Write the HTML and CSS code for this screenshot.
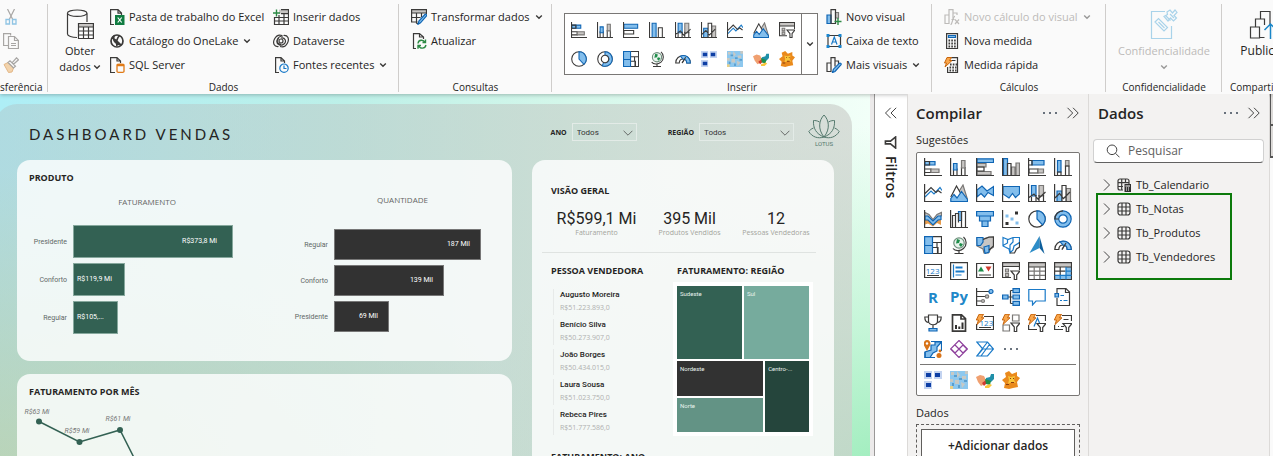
FILE: index.html
```html
<!DOCTYPE html>
<html lang="pt-BR">
<head>
<meta charset="utf-8">
<title>Dashboard Vendas</title>
<link rel="stylesheet" href="styles.css">
</head>
<body>
<svg class="sprite" aria-hidden="true">
  <symbol id="chev" viewBox="0 0 8 8"><path class="chev" d="M1.2 2.5 4 5.3 6.8 2.5"/></symbol>
  <symbol id="thin-down" viewBox="0 0 10 6"><path class="thin" d="M.6.8 5 5.2 9.4.8"/></symbol>
  <symbol id="thin-right" viewBox="0 0 8 14"><path class="thin" d="M1 1.5 6.5 7 1 12.500"/></symbol>
  <symbol id="dbl-right" viewBox="0 0 14 12"><path class="thin" d="M1.500.800 6.700 6 1.500 11.200M7 .800 12.200 6 7 11.200"/></symbol>
  <symbol id="dbl-left" viewBox="0 0 14 12"><path class="thin" d="M12.200.800 7 6 12.200 11.200M6.700.800 1.500 6 6.700 11.200"/></symbol>
  <symbol id="more" viewBox="0 0 18 18"><g class="dots"><circle cx="3" cy="9" r="1"/><circle cx="9" cy="9" r="1"/><circle cx="15" cy="9" r="1"/></g></symbol>

  <symbol id="cut" viewBox="0 0 16 16"><path class="g1" d="M4.500 0 10 11M11.500 0 6 11"/><path class="bsoft" d="M3 10.500h3.500v4.500H3zM9.500 10.500H13v4.500H9.500z"/></symbol>
  <symbol id="copy" viewBox="0 0 16 16"><path class="g1" d="M5 12.500H.600V.600h7v2M5.500 3.500h6l3.900 3.900v8.100H5.500zM11.500 3.500v4h4M8 10.500h5M8 12.500h5"/></symbol>
  <symbol id="brush" viewBox="0 0 16 16"><path class="tan" d="M1 7.500 5 5.500l5.500 5.500-1.500 4-3.500.500z"/><path class="g1" d="M5 5.500 7 3.800l5.500 5.500L10.500 11zM9 5.800l4.500-5 2 2-5 4.500"/></symbol>

  <symbol id="database" viewBox="0 0 28 30"><path class="k" d="M1.500 4.500v20.500c0 2 4.500 3.500 9.500 3.500M21 4.500V13"/><ellipse class="k" cx="11.200" cy="4.200" rx="9.800" ry="3.200"/><path class="w" d="M12.500 14.500h14.900v15H12.500z"/><path class="gf" d="M12.500 14.500h14.900v3.500H12.500z"/><path class="k" d="M12.500 14.500h14.900v15H12.500zM12.500 18h15M12.500 22h15M12.500 26h15M17.500 18v12M22.500 18v12"/></symbol>
  <symbol id="excel" viewBox="0 0 16 16"><path class="k" d="M5 15.500H1.600V.600H9l3.500 3.500V6M9 .600v3.500h3.500"/><path class="xl" d="M6 6h9.500v10H6z"/><path class="xlx" d="m8.700 8.500 4 5M12.700 8.500l-4 5"/></symbol>
  <symbol id="onelake" viewBox="0 0 16 16"><circle class="kk" cx="8" cy="8" r="6"/><path class="kk" d="M3 5c3 1 5 3 9 7M5 2.500C3.500 7 6 11 12 12M10.500 2.500C8 5 7 8 8 13"/></symbol>
  <symbol id="sql" viewBox="0 0 16 16"><path class="k" d="M6 15.500H1.600V.600H8L11.500 4v2M8 .600V4h3.500"/><path class="or" d="M8 8v6.500c0 .600 1.500 1 3.500 1s3.500-.400 3.500-1V8c0-1-7-1-7 0 0 .900 7 .900 7 0"/></symbol>
  <symbol id="enter" viewBox="0 0 16 16"><path class="gf" d="M6 .600h9.500v4H6z"/><path class="k" d="M8 .600h7.500v14.900H1.500V8M8 4.600h7.500M1.500 8.500h14M1.500 12h14M6 6v9.500M11 4.600v11"/><path class="gr" d="M0 4h7M3.500.500v7"/></symbol>
  <symbol id="dataverse" viewBox="0 0 16 16"><path class="k" d="M5.500 13.500C1 14-.500 10 1.500 6 3 3 6 1.500 9 2.500M10.500 2.500C15 2 16.500 6 14.500 10c-1.500 3-4.500 4.500-7.500 3.500M8 5c4-1 6 3.500 3 6s-8 .500-7-3.500c.700-2.800 3-4.500 6-4.500M8 11c-4 .500-5-4-2-5.500"/><circle class="k" cx="8" cy="8" r="2"/></symbol>
  <symbol id="recent" viewBox="0 0 16 16"><path class="k" d="M6 15.500H2.600V.600H8L11.500 4v2M8 .600V4h3.500"/><circle class="bl" cx="11" cy="11.200" r="4.200"/><path class="bl" d="M11 8.500v3h2.500"/></symbol>
  <symbol id="transform" viewBox="0 0 16 16"><path class="gf" d="M.600.600h14.900v3.400H.600z"/><path class="k" d="M7 14.500H5.500M15.500 5V.600H.600V13h6M.600 4h14.900M.600 8.500h9M5.500 4v10.500M10.500 4v4"/><path class="b" d="m7 15.300.900-3.300 6-6.500c1-.800 2.300.500 1.600 1.500l-6 6.800z"/></symbol>
  <symbol id="refresh" viewBox="0 0 16 16"><path class="k" d="M5 15.500H2.500V.600h6L12.500 4v2M8.500.600V4h4"/><path class="gr" d="M7 10.500c.500-4 5.500-4.200 7-1M14.500 6.500v3h-3M15 12c-1 4-6 4.200-7.500.500M7 15.800v-3.300h3"/></symbol>
  <symbol id="newvisual" viewBox="0 0 16 16"><path class="b" d="M1 6h4v8.500H1z"/><path class="gg" d="M9.500 3.500h3V9h-3z"/><path class="k" d="M5 14.500V.600h4.500v13.900z"/><path class="gr" d="M8.500 12.500h7M12 9v7"/></symbol>
  <symbol id="textbox" viewBox="0 0 16 16"><path class="k" d="M2 2.500h12.500v11H2z"/><path class="bdot" d="M.500 1h3v3h-3zM12.500 1h3v3h-3zM.500 12h3v3h-3zM12.500 12h3v3h-3z"/><path class="bl" d="M5.500 11.500 8.300 4l2.700 7.500M6.500 9h3.700"/></symbol>
  <symbol id="morevisual" viewBox="0 0 16 16"><path class="k" d="M5 14.500H1V6h4zM5 14.500V.600h4v9M9 4h3.500v3"/><path class="b" d="m6.500 15.500.900-3.300 5.800-5.800c1.200-.900 2.500.500 1.700 1.500L9 14.500z"/></symbol>
  <symbol id="calcvisual" viewBox="0 0 16 16"><path class="gg2" d="M1 6h4v8.500H1zM5 14.500V.600h4v9M9.500 4h3.500v2"/><path class="gg2" d="M6.500 15.800c2 0 2-8.500 4.500-8.500M7.500 10.500h3M11 10.500l4 4.500M15 10.500 11 15"/></symbol>
  <symbol id="calc" viewBox="0 0 16 16"><path class="k" d="M2.600.600h10.900v14.900H2.600z"/><path class="b" d="M4.500 2.500h7v2h-7z"/><path class="keys" d="M4.500 7.500h8M4.500 10.500h8M4.500 13.500h8"/></symbol>
  <symbol id="calcfast" viewBox="0 0 16 16"><path class="k" d="M7 .600h6.500v14.900H3.600V10M7 3.500h4.500"/><path class="keys" d="M6 7.500h7M5.500 10.500h7M5.500 13.500h7"/><path class="bolt" d="M3 .500h4.500l-2 3H8L1 10l1.500-4H.500z"/></symbol>
  <symbol id="sensitivity" viewBox="0 0 28 30"><path class="bs" d="M15 2.500H1.500v27h20V17M5 13l3.500-3.500 9 9-3.500 3.500zM8.500 13l6 6M17 3l3-2 2.500 3L25 1l2 2.500-3 3 2.500 2.500-3 3-3-3-2.500 3-4-4.500 3.500-2zM15.500 6.500l5 5M20 5l4 4"/></symbol>
  <symbol id="publish" viewBox="0 0 28 30"><path class="k" d="M1.500 18h9v11h-9zM6.500 18v-8h9v6M15.500 28.500h-5M11.500 10V2.500h9.500V16"/><path class="bl2" d="M21.500 30V15M15.500 21l6-6 6 6"/></symbol>
  <symbol id="funnel-ic" viewBox="0 0 14 14"><path class="kk" d="M1 1.500h12L8.500 7v5.500h-3V7z"/></symbol>
  <symbol id="search" viewBox="0 0 14 14"><circle class="thin" cx="6" cy="5.800" r="4.800"/><path class="thin" d="m9.500 9.300 4 4"/></symbol>
  <symbol id="tbl" viewBox="0 0 14 14"><rect class="k12" x="1" y="1" width="12" height="12" rx="2.500"/><path class="k12" d="M5 1v12M9 1v12M1 5h12M1 9h12"/></symbol>
  <symbol id="tblcalc" viewBox="0 0 14 14"><path class="k12" d="M12 6V3c0-1.200-.800-2-2-2H3C1.800 1 1 1.800 1 3v7c0 1.200.800 2 2 2h3M4.700 1v11M8.500 1v4M1 4.700h11M1 8.500h5"/><path class="dk" d="M7.500 6H14v8H7.500z"/><path class="wl" d="M8.500 8h4.500M9 10h1M11 10h1M9 12h1M11 12h1"/></symbol>

  <symbol id="sbar" viewBox="0 0 18 18"><path class="b" d="M1 3.500h4.500v3.500H1zM5.500 3.500h5.500v3.500H5.500z"/><path class="w" d="M1 11h6v3.500H1z"/><path class="k" d="M1 3.500h4.500v3.500H1M1 11h6v3.500H1"/><path class="g" d="M7 11h8v3.500H7z"/><path class="k" d="M.600 0v17.500H18"/></symbol>
  <symbol id="scol" viewBox="0 0 18 18"><path class="k" d="M3.500 11h3.500v6.500H3.500zM11.500 9.500H15v8h-3.500z"/><path class="b" d="M3.500 5.500h3.500V12H3.500z"/><path class="g" d="M11.500 2.500H15v7.500h-3.500z"/><path class="k" d="M.600 0v17.500H18"/></symbol>
  <symbol id="cbar" viewBox="0 0 18 18"><path class="b" d="M1 2.500h15.500v4.500H1z"/><path class="k" d="M1 9.500h11v4H1zM.600 0v17.500H18"/></symbol>
  <symbol id="ccol" viewBox="0 0 18 18"><path class="b" d="M3.500 1.500H8v16H3.500z"/><path class="k" d="M10.500 6.500H15v11h-4.500zM.600 0v17.500H18"/></symbol>
  <symbol id="cbar2" viewBox="0 0 18 18"><path class="b" d="M1 .800h16.500v3.700H1z"/><path class="g" d="M1 5.500h9V9H1zM1 13.500h14V17H1z"/><path class="k" d="M1 9h7v4H1zM.600 0v17.500H18"/></symbol>
  <symbol id="ccol2" viewBox="0 0 18 18"><path class="b" d="M1.500.600H5.500v16.900H1.500z"/><path class="g" d="M9.500 9H13v8.500H9.500zM14 5h3.500v12.500H14z"/><path class="k" d="M5.500 5.500H9v12H5.500zM.600 0v17.500H18"/></symbol>
  <symbol id="hbar" viewBox="0 0 18 18"><path class="b" d="M4 2.500h12V7H4z"/><path class="k" d="M1 2.500h3V7H1M1 11h9v4H1z"/><path class="g" d="M10 11h5.500v4H10z"/><path class="k" d="M.600 0v17.500H18"/></symbol>
  <symbol id="hcol" viewBox="0 0 18 18"><path class="b" d="M3.500 2.500H7V14H3.500z"/><path class="g" d="M11.500 2.500H15V8h-3.500z"/><path class="k" d="M3.500 14H7v3.500H3.500zM11.500 8H15v9.500h-3.500zM.600 0v17.500H18"/></symbol>
  <symbol id="line" viewBox="0 0 18 18"><path class="bl" d="M1 13 7 7l3 3 6-6.500 2 3"/><path class="k" d="M1 9.500 7 3.500l5 5 2-2 3.500 2.500M.600 0v17.500H18"/></symbol>
  <symbol id="area" viewBox="0 0 18 18"><path class="g" d="m8 9 5-8 4.500 14.500-1 2"/><path class="w" d="M1 14 6.500 2l5 9-4 6.500H1z"/><path class="k" d="M.800 13 6.500 2 11 10"/><path class="b" d="M.800 14.500 4 10.500l3 3.500 4.500-6.500 6 8v2H.800z"/></symbol>
  <symbol id="sarea" viewBox="0 0 18 18"><path class="b" d="M1 6l5-4 5 5 6.500-4.500v9L12 8.500 8.500 13 5 9.500 1 13z"/><path class="k" d="M.600 0v17.500H18"/></symbol>
  <symbol id="harea" viewBox="0 0 18 18"><path class="b" d="M1 2.500h16.500V10l-4 3.500-3-4-3.500 4.500L1 10z"/><path class="k" d="M.600 0v17.500H18"/></symbol>
  <symbol id="lcs" viewBox="0 0 18 18"><path class="b" d="M3.500 1.500H8V12H3.500z"/><path class="g" d="M11 1.500h4.500V12H11z"/><path class="k" d="M3.500 11v6.500M8 11v6.500M11 11v6.500M15.500 11v6.500M1 13.500 6 10l4 5 7.500-7M.600 0v17.500H18"/></symbol>
  <symbol id="lcc" viewBox="0 0 18 18"><path class="b" d="M3 7h5v10.500H3z"/><path class="g" d="M12 4.500h4.500v13H12z"/><path class="w" d="M8 1.500h4v16H8z"/><path class="k" d="M8 17.500v-16h4v16M1 14l4.500-4.500 4 5L16 8M.600 0v17.500H18"/></symbol>
  <symbol id="ribbon" viewBox="0 0 18 18"><path class="or2" d="M1 9l3 1 4 4 5-4 4-.500V15l-4-2-4 3.500-5-3-3 1z"/><path class="g" d="M1 2.500l4 2 4 5 4-5 4.500-2v3l-4 3-5 4-5-5-3-1z"/><path class="b" d="M1 6h3l5 5 5-5h3v3.500l-3 .500-5 5-5-5H1z"/><path class="k" d="M.600 0v17.500H18"/></symbol>
  <symbol id="waterfall" viewBox="0 0 18 18"><path class="b" d="M8.500 1.500h3v9h-3z"/><path class="k" d="M2.500 5.500h3v12h-3zM5.500 5.500v-2h3v9M11.500 1.500h4v16h-4z"/><path class="k" d="M.600 0v17.500H18"/></symbol>
  <symbol id="funnel" viewBox="0 0 18 18"><path class="b" d="M.600 1.500h16.900v4.500H.600zM3.500 6h11v5h-11zM6 11h6v5.500H6z"/></symbol>
  <symbol id="scatter" viewBox="0 0 18 18"><path class="k" d="M.600 0v17.500H18"/><path class="lb" d="M3.500 4.500h3v3h-3zM8.500 7.500h3v3h-3zM13.500 11.500h3v3h-3z"/><path class="dk" d="M13 1.500h3v3h-3zM3.500 12h3v3h-3z"/></symbol>
  <symbol id="pie" viewBox="0 0 18 18"><circle class="k" cx="9" cy="9" r="8.200"/><path class="b" d="M9 .800A8.200 8.200 0 0 1 14.500 15L9 9z"/></symbol>
  <symbol id="donut" viewBox="0 0 18 18"><circle class="k" cx="9" cy="9" r="8.200"/><path class="b" d="M9 .800a8.200 8.200 0 0 1 0 16.400 8 8 0 0 1-3-.700l1.500-3.700A4.200 4.200 0 1 0 9 4.800z"/><circle class="wk" cx="9" cy="9" r="4.200"/></symbol>
  <symbol id="donut2" viewBox="0 0 18 18"><circle class="b" cx="9" cy="9" r="8.200"/><circle class="w" cx="9" cy="9" r="4.200"/><circle class="bn" cx="9" cy="9" r="4.200"/><path class="k" d="M9 .800A8.200 8.200 0 0 0 .800 9h4"/></symbol>
  <symbol id="tree" viewBox="0 0 18 18"><path class="k" d="M.600.600h16.900v16.900H.600zM9 6.500h8.500M13 6.500v5M9 11.500h5v6M13.500 11.500v6"/><path class="b" d="M.600.600H8.500v8.900H.600zM.600 9.500H8.500v8H.600z"/></symbol>
  <symbol id="globe" viewBox="0 0 18 18"><circle class="gn" cx="9" cy="7" r="5.200"/><path class="grf" d="M7 3l3 1-1 3-3 .500zM10 7l3 1-2 3-2-2z"/><path class="k" d="M13.500 1C17 4 17 9.500 13.500 12.500S5 15 3 12.500M9 14.500v3M4.500 17.500h9"/></symbol>
  <symbol id="fmap" viewBox="0 0 18 18"><path class="g" d="M1 2l5 1.500 5-2L17.500 1v10l-3 2-2 4H8l-1-4-6-3z"/><path class="b" d="M.800 1.500H7V6L4.500 9.500H1zM8 11l5-1.500V16l-4 1.500z"/><path class="k" d="M7 3.500 11 2l2-1h4.500v9L13 14"/></symbol>
  <symbol id="smap" viewBox="0 0 18 18"><path class="w" d="M1 1.500l5 2 5-2h6.500v10l-3 2-2 4H8l-1-4-6-3z"/><path class="bl" d="M1 1.500l5 2 5-2h6.500v5L12 10l-1 4-3 3-1-4-6-3zM1 9.500 5.500 7V3.500M11 1.500V6l-3 3v8"/><path class="k" d="M17.500 6v5l-3 2-2 4H8"/></symbol>
  <symbol id="azure" viewBox="0 0 18 18"><path class="az1" d="M11.500 0 1.500 17l10-5z"/><path class="az2" d="m11.500 0 5 18-5-6z"/></symbol>
  <symbol id="gauge" viewBox="0 0 18 18"><path class="k" d="M.800 13.500C1 2.500 17 2.500 17.200 13.500h-4C13 7.500 5 7.500 4.800 13.500zM8 13.500 12 7"/><path class="b" d="M6 5.800c5-2 11 .700 11.200 7.700h-4c0-3-2-4.500-4.200-4.500z"/><path class="k" d="M8 13.500 12 7"/></symbol>
  <symbol id="card" viewBox="0 0 18 18"><path class="k" d="M.600 2.500h16.900v13H.600zM3 13.500h12"/><text class="num" x="1.800" y="11.500">123</text></symbol>
  <symbol id="mcard" viewBox="0 0 18 18"><path class="k" d="M.600.600h16.900v16.900H.600z"/><path class="bl" d="M3.500 2.500v13M5.500 5h7M5.500 9h9M5.500 13h6M5.500 5.800h7M5.500 9.800h9"/></symbol>
  <symbol id="kpi" viewBox="0 0 18 18"><path class="k" d="M.600 1.500h16.900v14H.600zM3 13h12"/><path class="grf" d="m5 4.500 3 5H2z"/><path class="rd" d="m12.500 9.500-3-5h6z"/></symbol>
  <symbol id="slicer" viewBox="0 0 18 18"><path class="gf" d="M.600.600h16.900v4H.600z"/><path class="k" d="M9 15.500H.600V.600h16.900V8M.600 4.500h16.900"/><path class="g" d="M3.500 7h3v3h-3zM3.500 11.500h3v3h-3z"/><path class="k" d="M9 9h9l-3.300 4v4.500h-2.400V13z"/></symbol>
  <symbol id="table" viewBox="0 0 18 18"><path class="gf" d="M.600.600h16.900v4.400H.600z"/><path class="k" d="M.600.600h16.900v16.900H.600zM.600 5h16.900"/><path class="g0" d="M1 9.200h16M1 13.400h16M6.200 5v12M11.800 5v12"/></symbol>
  <symbol id="matrix" viewBox="0 0 18 18"><path class="gf" d="M.600.600h16.900v4.400H.600z"/><path class="lb" d="M12 5h5.500v12.500H.600V13.500H12z"/><path class="k" d="M.600.600h16.900v16.900H.600zM.600 5h16.900M.600 9.200h11M6.200 5v8"/><path class="bl" d="M12 5v12.500M.600 13.400h17M12 9.200h5.500M6.200 13.400v4"/></symbol>
  <symbol id="rsc" viewBox="0 0 18 18"><text class="big" x="4" y="15">R</text></symbol>
  <symbol id="py" viewBox="0 0 18 18"><text class="big" x="0" y="14">Py</text></symbol>
  <symbol id="keyinf" viewBox="0 0 18 18"><path class="k" d="M.600 0v17.500H18M1 3.500h12M1 8.500h8M1 13h4"/><circle class="b" cx="15" cy="3.500" r="2"/><circle class="g" cx="11" cy="8.500" r="1.700"/><circle class="g" cx="7" cy="13" r="1.500"/></symbol>
  <symbol id="decomp" viewBox="0 0 18 18"><path class="k" d="M6 9h5M8.500 2.500v13M8.500 2.500H11M8.500 15.500H11"/><path class="b" d="M.600 7h5.400v4H.600zM11 .600h6.500v4H11zM11 7h6.500v4H11zM11 13.400h6.500v4H11z"/></symbol>
  <symbol id="qna" viewBox="0 0 18 18"><path class="bl" d="M.800 1.500h16.400v11.500H8l-3.500 4V13H.800z"/></symbol>
  <symbol id="narr" viewBox="0 0 18 18"><path class="k" d="M3 5V.600h9L15.500 4v13.500H3V10M11.500.600V4.500h4"/><path class="b" d="M1 5.500h3.500V9H1z"/><path class="bl" d="M6.500 7.500H10M6 12.500h2M9.500 12.500h4"/></symbol>
  <symbol id="trophy" viewBox="0 0 18 18"><path class="k" d="M4.500 1h9v6c0 5-9 5-9 0zM4.500 3H.800c0 4 1.500 5.500 4.200 5.500M13.500 3h3.700c0 4-1.500 5.500-4.200 5.500M9 11v3"/><path class="b" d="M5 14.500h8v2.500H5z"/></symbol>
  <symbol id="report" viewBox="0 0 18 18"><path class="k15" d="M2.500.800h9L15.500 4.500v12.700h-13zM11 .800V5h4.500"/><path class="dk" d="M5 11h2v4H5zM8.300 12.500h2V15h-2zM11.500 8.500h2V15h-2z"/></symbol>
  <symbol id="card-b" viewBox="0 0 18 18"><path class="k" d="M8 2.500h9.500v13H.600V10M3 13.500h12"/><text class="num" x="3.500" y="11.500">123</text><path class="bolt" d="M3 .300h4.500l-2 3.500H8L1 10.500l1.500-4.500H.300z"/></symbol>
  <symbol id="slic-b" viewBox="0 0 18 18"><path class="g0" d="M10.500 1h6.500v6h-6.500zM1 11h6.500v6H1z"/><path class="k" d="M9 9h9l-3.300 4v4.500h-2.400V13z"/><path class="bolt" d="M3 .300h4.500l-2 3.500H8L1 10.500l1.500-4.500H.300z"/></symbol>
  <symbol id="text-b" viewBox="0 0 18 18"><path class="k" d="M8 1.500h9.500V7M.600 11v4.500H9"/><path class="bl" d="M6 12.500 9.500 4l2 5"/><path class="k" d="M9 9.500h9l-3.300 4v4h-2.400v-4z"/><path class="bolt" d="M3 .300h4.500l-2 3.500H8L1 10.500l1.500-4.500H.300z"/></symbol>
  <symbol id="list-b" viewBox="0 0 18 18"><path class="k" d="M8 1.500h9.500V7M.600 11v4.500H9M9.500 5.500h5M4 12.500h1M7 12.500h3"/><path class="k" d="M9 9.500h9l-3.300 4v4h-2.400v-4z"/><path class="bolt" d="M3 .300h4.500l-2 3.500H8L1 10.500l1.500-4.500H.300z"/></symbol>
  <symbol id="arcgis" viewBox="0 0 18 18"><path class="b" d="M7 5h4V2h6.500L13 7v4l-4 2-3 4.500H1V12l6-2z"/><path class="bn2" d="M7 1.500h10.500V11M11 17.500H1V12"/><path class="orf" d="M3 0C-.500 0-.500 4.500 0 5.500L3 11l3-5.500C7 4 6.500 0 3 0z"/><circle class="w" cx="3" cy="3.500" r="1.200"/><circle class="orf" cx="16" cy="11" r="1.400"/><circle class="orf" cx="15" cy="15.500" r="2.500"/></symbol>
  <symbol id="papps" viewBox="0 0 18 18"><path class="pu" d="m9 .500 8.500 8.500L9 17.500.500 9zM5 5l8 8M13 5l-8 8M5 5l4 4-4 4-4-4M13 5l4 4-4 4-4-4 4-4"/></symbol>
  <symbol id="flow" viewBox="0 0 18 18"><path class="bl" d="M.800 2h10.700l6 7-6 7H.800l6-7zM6.800 9h10.700M.800 16 11.500 2M5 16l8.500-11.500"/></symbol>
  <symbol id="cv1" viewBox="0 0 18 18"><path class="lav" d="M0 0h8v8H0zM10 0h8v8h-8zM0 10h8v8H0z"/><path class="navy" d="M2 2h5v4H2zM11 2h5v4h-5zM2 12h5v4H2z"/></symbol>
  <symbol id="cv2" viewBox="0 0 18 18"><path class="mapb" d="M0 0h18v18H0z"/><path class="mapg" d="M1 1h3v3H1zM7 0l3 4-3 3zM12 5h4v3h-4zM5 9h4v4H5zM11 11l4 2-3 4zM15 0h3v3h-3zM0 8h3v3H0z"/><path class="mapd" d="M4 4h3v2H4zM9 7h3v2H9zM2 12h2v3H2zM14 9h3v2h-3zM8 14h2v3H8z"/><path class="mapy" d="M0 15h3v3H0z"/></symbol>
  <symbol id="cv3" viewBox="0 0 18 18"><path class="peach" d="M0 6l4-2 4 1 2 4-1 4-4 2-3-4z"/><path class="teal" d="m10 7 4-1 1-3h3v5l-3 3-5-1z"/><path class="rd" d="M6 12l4-3 1 3-3 3z"/><path class="grf" d="m9 8 6 2-1 4-4-1z"/><path class="yel" d="m9 15 5-2 2 1-3 3H9z"/></symbol>
  <symbol id="cv4" viewBox="0 0 18 18"><path class="orr" d="m7 0 3 3 5-2v4l3 2-3 4 1 5-5 1-4 1-5-1 1-5-3-3 4-3-1-4z"/><path class="yel" d="M6 5l3 1 4-1-1 4 2 3-4-1-4 2 1-4z"/><path class="brn" d="M8 7h1v1H8zM11 7h1v1h-1zM4 13h3v1H4zM9 11h3v1H9z"/></symbol>
</svg>

<header class="ribbon">
  <section class="group g-clip">
    <div class="rows">
      <button class="cmd" aria-label="Recortar"><svg class="i16"><use href="#cut"/></svg></button>
      <button class="cmd" aria-label="Copiar"><svg class="i16"><use href="#copy"/></svg></button>
      <button class="cmd" aria-label="Pincel"><svg class="i16"><use href="#brush"/></svg></button>
    </div>
    <h2 class="glabel">sferência</h2>
  </section>
  <section class="group g-data">
    <div class="cols">
      <button class="big-cmd"><svg class="i28"><use href="#database"/></svg><span>Obter</span><span>dados<svg class="i8"><use href="#chev"/></svg></span></button>
      <div class="rows first">
        <button class="cmd"><svg class="i16"><use href="#excel"/></svg>Pasta de trabalho do Excel</button>
        <button class="cmd"><svg class="i16"><use href="#onelake"/></svg>Catálogo do OneLake<svg class="i8"><use href="#chev"/></svg></button>
        <button class="cmd"><svg class="i16"><use href="#sql"/></svg>SQL Server</button>
      </div>
      <div class="rows">
        <button class="cmd"><svg class="i16"><use href="#enter"/></svg>Inserir dados</button>
        <button class="cmd"><svg class="i16"><use href="#dataverse"/></svg>Dataverse</button>
        <button class="cmd"><svg class="i16"><use href="#recent"/></svg>Fontes recentes<svg class="i8"><use href="#chev"/></svg></button>
      </div>
    </div>
    <h2 class="glabel">Dados</h2>
  </section>
  <section class="group g-query">
    <div class="rows">
      <button class="cmd"><svg class="i16"><use href="#transform"/></svg>Transformar dados<svg class="i8"><use href="#chev"/></svg></button>
      <button class="cmd"><svg class="i16"><use href="#refresh"/></svg>Atualizar</button>
    </div>
    <h2 class="glabel">Consultas</h2>
  </section>
  <section class="group g-insert">
    <div class="cols">
      <div class="gallery"><div class="gallery-grid" id="gallery"></div><button class="gallery-more" aria-label="Mais"><svg class="i8"><use href="#chev"/></svg></button></div>
      <div class="rows">
        <button class="cmd"><svg class="i16"><use href="#newvisual"/></svg>Novo visual</button>
        <button class="cmd"><svg class="i16"><use href="#textbox"/></svg>Caixa de texto</button>
        <button class="cmd"><svg class="i16"><use href="#morevisual"/></svg>Mais visuais<svg class="i8"><use href="#chev"/></svg></button>
      </div>
    </div>
    <h2 class="glabel">Inserir</h2>
  </section>
  <section class="group g-calc">
    <div class="rows">
      <button class="cmd" disabled><svg class="i16"><use href="#calcvisual"/></svg>Novo cálculo do visual<svg class="i8"><use href="#chev"/></svg></button>
      <button class="cmd"><svg class="i16"><use href="#calc"/></svg>Nova medida</button>
      <button class="cmd"><svg class="i16"><use href="#calcfast"/></svg>Medida rápida</button>
    </div>
    <h2 class="glabel">Cálculos</h2>
  </section>
  <section class="group g-sens">
    <button class="big-cmd" disabled><svg class="i28"><use href="#sensitivity"/></svg><span>Confidencialidade</span><span><svg class="i8"><use href="#chev"/></svg></span></button>
    <h2 class="glabel">Confidencialidade</h2>
  </section>
  <section class="group g-share">
    <button class="big-cmd"><svg class="i28"><use href="#publish"/></svg><span>Publicar</span></button>
    <h2 class="glabel">Compartilhar</h2>
  </section>
</header>

<main class="work">
  <div class="canvas">
    <article class="sheet">
      <header class="sheet-head">
        <h1 class="title">DASHBOARD VENDAS</h1>
        <label class="slicer ano"><span>ANO</span><span class="drop"><select><option>Todos</option></select><svg class="arrow"><use href="#thin-down"/></svg></span></label>
        <label class="slicer regiao"><span>REGIÃO</span><span class="drop"><select><option>Todos</option></select><svg class="arrow"><use href="#thin-down"/></svg></span></label>
        <svg class="lotus" viewBox="0 0 32 34"><path d="M16 1c-5 5-6.500 14 0 22 6.500-8 5-17 0-22zM11.500 8C9 6.500 7 6.500 5.500 6.500 5 14 8 20 16 23M20.500 8c2.500-1.500 4.500-1.500 6-1.500C27 14 24 20 16 23M5.500 14C3 15 2 16 .800 17.500 4 23 10 25 16 23M26.500 14c2.500 1 3.500 2 4.700 3.500C28 23 22 25 16 23"/><text x="16" y="32">LOTUS</text></svg>
      </header>
      <div class="cards">
        <div class="left">
          <section class="card product">
            <h2 class="ctitle">PRODUTO</h2>
            <div class="charts">
              <div class="chart green">
                <h3>FATURAMENTO</h3>
                <div class="bar"><span>Presidente</span><i style="width:160px" class="in">R$373,8 Mi</i></div>
                <div class="bar"><span>Conforto</span><i style="width:52px">R$119,9 Mi</i></div>
                <div class="bar"><span>Regular</span><i style="width:45px">R$105,...</i></div>
              </div>
              <div class="chart black">
                <h3>QUANTIDADE</h3>
                <div class="bar"><span>Regular</span><i style="width:147px">187 Mil</i></div>
                <div class="bar"><span>Conforto</span><i style="width:110px">139 Mil</i></div>
                <div class="bar"><span>Presidente</span><i style="width:55px">69 Mil</i></div>
              </div>
            </div>
          </section>
          <section class="card month">
            <h2 class="ctitle">FATURAMENTO POR MÊS</h2>
            <svg class="trend" viewBox="0 0 495 120"><path d="M22 20.500 62.500 41 103 29 143 108 184 70 225 96"/><circle cx="22" cy="20.500" r="3"/><circle cx="62.500" cy="41" r="3"/><circle cx="103" cy="29" r="3"/><text x="20" y="13">R$63 Mi</text><text x="60" y="32">R$59 Mi</text><text x="101" y="20">R$61 Mi</text></svg>
          </section>
        </div>
        <section class="card overview">
          <h2 class="ctitle">VISÃO GERAL</h2>
          <div class="kpis">
            <div class="kpi"><b>R$599,1 Mi</b><span>Faturamento</span></div>
            <div class="kpi"><b>395 Mil</b><span>Produtos Vendidos</span></div>
            <div class="kpi"><b>12</b><span>Pessoas Vendedoras</span></div>
          </div>
          <div class="split">
            <div class="people">
              <h2 class="ctitle">PESSOA VENDEDORA</h2>
              <ul>
                <li><b>Augusto Moreira</b><span>R$51.223.893,0</span></li>
                <li><b>Benício Silva</b><span>R$50.273.907,0</span></li>
                <li><b>João Borges</b><span>R$50.434.015,0</span></li>
                <li><b>Laura Sousa</b><span>R$51.023.750,0</span></li>
                <li><b>Rebeca Pires</b><span>R$51.777.586,0</span></li>
              </ul>
            </div>
            <div class="region">
              <h2 class="ctitle">FATURAMENTO: REGIÃO</h2>
              <div class="treemap">
                <div class="trow"><div class="t sudeste">Sudeste</div><div class="t sul">Sul</div></div>
                <div class="trow low"><div class="tcol"><div class="t nordeste">Nordeste</div><div class="t norte">Norte</div></div><div class="t centro">Centro-...</div></div>
              </div>
            </div>
          </div>
          <h2 class="ctitle year">FATURAMENTO: ANO</h2>
        </section>
      </div>
    </article>
  </div>
  <aside class="filters">
    <button class="plain" aria-label="Expandir"><svg class="dbl"><use href="#dbl-left"/></svg></button>
    <svg class="fic"><use href="#funnel-ic"/></svg>
    <h2>Filtros</h2>
  </aside>
  <aside class="pane build">
    <header class="phead"><h2>Compilar</h2><button class="plain" aria-label="Mais opções"><svg class="i18"><use href="#more"/></svg></button><button class="plain" aria-label="Recolher"><svg class="dbl"><use href="#dbl-right"/></svg></button></header>
    <h3 class="sub">Sugestões</h3>
    <div class="visuals">
      <div class="vgrid" id="visuals"></div>
      <div class="vgrid custom" id="custom"></div>
    </div>
    <h3 class="sub data">Dados</h3>
    <div class="well"><button class="add">+Adicionar dados</button></div>
  </aside>
  <aside class="pane fields">
    <header class="phead"><h2>Dados</h2><button class="plain" aria-label="Mais opções"><svg class="i18"><use href="#more"/></svg></button><button class="plain" aria-label="Recolher"><svg class="dbl"><use href="#dbl-right"/></svg></button></header>
    <label class="search"><svg class="i14"><use href="#search"/></svg><input type="search" placeholder="Pesquisar"></label>
    <ul class="tree">
      <li><svg class="tw"><use href="#thin-right"/></svg><svg class="i14"><use href="#tblcalc"/></svg>Tb_Calendario</li>
      <li><svg class="tw"><use href="#thin-right"/></svg><svg class="i14"><use href="#tbl"/></svg>Tb_Notas</li>
      <li><svg class="tw"><use href="#thin-right"/></svg><svg class="i14"><use href="#tbl"/></svg>Tb_Produtos</li>
      <li><svg class="tw"><use href="#thin-right"/></svg><svg class="i14"><use href="#tbl"/></svg>Tb_Vendedores</li>
    </ul>
    <div class="mark"></div>
  </aside>
  <div class="edge"><div></div><div></div></div>
</main>
<script src="app.js"></script>
</body>
</html>
```

FILE: styles.css
```css
* { box-sizing: border-box; }
body { margin: 0; height: 100vh; overflow: hidden; display: flex; flex-direction: column; font: 11px/16px "Open Sans", "Noto Sans", sans-serif; color: #252423; background: #fafafa; }
h1, h2, h3, ul { margin: 0; padding: 0; font-weight: 400; list-style: none; }
button, input, select { font: inherit; color: inherit; background: none; border: 0; padding: 0; margin: 0; }
svg { display: block; flex: none; }
.sprite { display: none; }

/* icon strokes and fills */
.k, .k12, .k15, .kk, .b, .bl, .bl2, .bn, .bn2, .bs, .g, .g0, .g1, .gg, .gg2, .gr, .or, .pu, .thin, .chev, .keys, .gn, .wl, .xlx { fill: none; stroke: #3b3a39; stroke-width: 1.2; }
.kk { stroke-width: 1.7; }
.k15 { stroke-width: 1.7; }
.b { stroke: #0f65b4; fill: #83beec; }
.bl { stroke: #1a7ac8; }
.bl2 { stroke: #1a86c8; stroke-width: 1.5; }
.bn, .bn2 { stroke: #0f65b4; }
.bs { stroke: #a9d3ea; }
.g { stroke: #797775; fill: #c8c6c4; }
.g0, .gg { stroke: #797775; }
.gg { fill: #c8c6c4; }
.gg2 { stroke: #bdbbb9; }
.g1 { stroke: #a8a6a4; }
.bsoft { fill: none; stroke: #8fc4e4; stroke-width: 1.3; }
.tan { fill: #f2d3ac; stroke: #e3b787; }
.w { fill: #fff; }
.wk { fill: #fff; stroke: #3b3a39; stroke-width: 1.2; }
.gf { fill: #c8c6c4; }
.gr { stroke: #2d8a45; stroke-width: 1.4; }
.gn { stroke: #6f8f7d; fill: #eaf4ee; }
.grf { fill: #1e8e4a; }
.rd { fill: #d03b2f; }
.or { stroke: #e07a16; stroke-width: 1.3; }
.orf { fill: #d8741a; }
.or2 { fill: #e79b4b; }
.orr { fill: #ea8a1c; }
.brn { fill: #8a3d10; }
.yel { fill: #f8c63c; }
.bolt { fill: #f9a64a; stroke: #c8650c; stroke-width: 1; }
.xl { fill: #107c41; }
.xlx { stroke: #fff; }
.bdot { fill: #1a86d0; }
.keys { stroke-width: 2; stroke-dasharray: 1.6 1.2; }
.lb { fill: #83beec; }
.dk { fill: #323130; }
.wl { stroke: #fff; }
.pu { stroke: #8e3f9c; }
.az1 { fill: #2d8dc8; }
.az2 { fill: #0d5f9c; }
.lav { fill: #c3d3f0; }
.navy { fill: #0e3fa5; }
.mapb { fill: #8ec8ee; }
.mapg { fill: #c8c9c4; }
.mapd { fill: #5b9fce; }
.mapy { fill: #e8d088; }
.peach { fill: #f0a070; }
.teal { fill: #1f8fa8; }
.chev { stroke-width: 1.4; }
.thin { stroke: #444; stroke-width: 1; }
.dots { fill: #3a4654; }
.num { font: 8px "Open Sans", sans-serif; fill: #1a7ac8; }
.big { font: 700 15px "Open Sans", sans-serif; fill: #1f88c9; }
.i8 { width: 8px; height: 8px; }
.i14 { width: 14px; height: 14px; }
.i16 { width: 16px; height: 16px; }
.i18 { width: 18px; height: 18px; }
.i28 { width: 28px; height: 30px; }

/* ribbon */
.ribbon { display: flex; flex: none; background: #fafafa; position: relative; box-shadow: 0 1px 4px rgba(0,0,0,.25); }
.group { position: relative; flex: none; display: flex; flex-direction: column; justify-content: space-between; padding-top: 5px; height: 94px; }
.group::after { content: ""; position: absolute; right: 0; top: 4px; bottom: 2px; width: 1px; background: #cfcdcb; }
.glabel { font-size: 10px; line-height: 14px; text-align: center; white-space: nowrap; }
.g-clip { width: 48px; overflow: hidden; }
.g-clip .cmd { margin-left: 3px; }
.g-clip .glabel { text-align: left; }
.g-data { width: 351px; }
.g-query { width: 153px; padding-left: 12px; }
.g-query .glabel { margin-left: -12px; }
.g-insert { width: 380px; padding-left: 12px; }
.g-insert .glabel { margin-left: -12px; }
.g-calc { width: 174px; padding-left: 12px; }
.g-calc .glabel { margin-left: -12px; }
.g-sens { width: 116px; }
.g-share { flex: 1 1 0; min-width: 0; overflow: hidden; padding-left: 8px; }
.g-share .glabel { text-align: left; }
.g-share .big-cmd { width: 66px; font-size: 12px; }
.g-share::after { display: none; }
.cols { display: flex; }
.rows { display: flex; flex-direction: column; }
.rows.first { width: 164px; }
.cmd { display: flex; align-items: center; gap: 4px; height: 24px; white-space: nowrap; }
.cmd .i8 { margin-left: 1px; }
.big-cmd { display: flex; flex-direction: column; align-items: center; width: 100%; padding-top: 4px; line-height: 16px; }
.big-cmd span { display: flex; align-items: center; gap: 2px; min-height: 16px; }
.big-cmd .i28 { margin-bottom: 4px; }
.g-data .big-cmd { width: 61px; padding-left: 3px; }
button:disabled { color: #bdbbb9; }
button:disabled .i8 { opacity: .5; }
.gallery { display: flex; border: 1px solid #797775; height: 62px; margin: 8px 8px 0 0; background: #fff; }
.gallery-grid { display: grid; grid-template-columns: repeat(9, 26px); align-content: space-around; padding: 1px; }
.gallery-grid .vis { width: 26px; height: 28px; }
.gallery-grid svg { width: 16px; height: 16px; }
.gallery-more { width: 16px; border-left: 1px solid #797775; display: grid; place-items: center; }
.vis { display: grid; place-items: center; }

/* report canvas */
.work { flex: 1; min-height: 0; display: flex; }
.canvas { flex: 1; min-width: 0; overflow: hidden; padding: 10px 18px 0 0; background: radial-gradient(ellipse 420px 360px at 102% 108%, #9becba 0, rgba(180,242,204,.7) 45%, transparent 100%), radial-gradient(ellipse 560px 330px at -2% 112%, rgba(196,222,150,.95) 0, transparent 100%), linear-gradient(90deg, #aeeef6, #bdf0e8 40%, #d4f7ea 65%, #f2fff8); }
.sheet { margin-left: -5px; height: 500px; border-radius: 22px 22px 0 0; padding: 0 18px 0 22px; background: linear-gradient(100deg, rgba(176,200,204,.5), rgba(194,204,198,.6) 55%, rgba(206,208,204,.7)); }
.sheet-head { display: flex; align-items: center; height: 56px; padding: 0 0 0 12px; }
.title { flex: 1; font: 15px/24px Lato, sans-serif; letter-spacing: 3px; padding-top: 4px; white-space: nowrap; }
.slicer { display: flex; align-items: center; gap: 5px; font: 700 7px/17px "Open Sans", sans-serif; }
.drop { position: relative; display: block; }
.drop select { appearance: none; display: block; width: 100%; height: 18px; border: 1px solid #e3ebe7; padding-left: 4px; font: 8px Roboto, sans-serif; color: #333; border-radius: 0; }
.arrow { position: absolute; right: 4px; top: 7px; width: 10px; height: 6px; opacity: .75; }
.ano { margin-right: 31px; }
.ano .drop { width: 65px; }
.regiao .drop { width: 95px; }
.lotus { width: 32px; height: 34px; margin: 0 -6px 2px 14px; }
.lotus path { fill: none; stroke: #54796d; stroke-width: 1; }
.lotus text { font: 6px Roboto, sans-serif; fill: #54796d; text-anchor: middle; }
.cards { display: grid; grid-template-columns: minmax(0, 495fr) minmax(0, 302fr); gap: 20px; height: 444px; }
.left { display: flex; flex-direction: column; gap: 13px; min-width: 0; }
.card { background: rgba(255,255,255,.8); border-radius: 13px; }
.ctitle { font-size: 9px; line-height: 14px; font-weight: 700; white-space: nowrap; }
.product { height: 201px; padding: 11px 12px 0; }
.charts { display: flex; }
.chart { flex: none; width: 226px; padding-top: 10px; }
.chart h3 { font: 8px/14px "Open Sans", sans-serif; color: #666; text-align: center; margin: 0 0 16px 10px; }
.bar { display: flex; align-items: center; height: 33px; margin-bottom: 5px; font: 7px/10px Roboto, sans-serif; }
.bar span { width: 38px; text-align: right; margin-right: 6px; color: #5f6866; }
.bar i { height: 33px; font-style: normal; color: #fff; background: #336153; border: 1px solid #86a89d; line-height: 31px; padding: 0 3px; white-space: nowrap; overflow: hidden; }
.bar .in { text-align: right; padding-right: 15px; }
.black { width: 240px; padding-top: 8px; }
.black h3 { margin: 0 0 22px 55px; }
.black .bar { height: 31px; }
.black .bar span { width: 73px; }
.black .bar i { height: 31px; background: #323232; border-color: #777; line-height: 29px; text-align: right; padding-right: 10px; }
.month { flex: 1; padding: 11px 0 0 12px; }
.trend { display: block; width: 495px; height: 120px; margin: 2px 0 0 -12px; }
.trend path { fill: none; stroke: #336153; stroke-width: 1.5; }
.trend circle { fill: #336153; }
.trend text { font: italic 7px Roboto, sans-serif; fill: #777; text-anchor: middle; }
.overview { min-width: 0; padding: 24px 18px 0 10px; }
.overview .ctitle { margin-left: 9px; }
.kpis { display: grid; grid-template-columns: 109px 77px 96px; height: 55px; padding-top: 11px; border-bottom: 1px solid #dfe3e1; }
.kpi { display: flex; flex-direction: column; align-items: center; white-space: nowrap; }
.kpi b { font: 16px/20px Roboto, sans-serif; }
.kpi span { font: 7px/8px "Open Sans", sans-serif; color: #a3a49c; }
.split { display: flex; padding-top: 11px; }
.people { width: 126px; }
.people ul { margin: 11px 0 0 11px; }
.people li { display: flex; flex-direction: column; border-left: 1px solid #e7eae9; padding-left: 6px; height: 26px; margin-bottom: 4px; white-space: nowrap; }
.people b { font: 500 8px/12px Roboto, sans-serif; }
.people span { font: 7px/14px "Open Sans", sans-serif; color: #b0b0b0; }
.region { flex: 1; min-width: 0; }
.treemap { height: 154px; margin: 4px 3px 0 5px; padding: 4px; background: #fff; display: flex; flex-direction: column; gap: 2px; }
.trow { display: flex; gap: 2px; flex: 73; }
.low { flex: 71; }
.tcol { flex: 89; display: flex; flex-direction: column; gap: 2px; }
.t { flex: 1; min-width: 0; color: #e9f3ef; font: 6px/8px Roboto, sans-serif; padding: 4px 3px; }
.sudeste { background: #336153; }
.sul { background: #76ab9d; }
.nordeste { background: #323232; }
.norte { background: #639385; }
.centro { background: #25453c; flex: 39; }
.overview .year { padding-top: 11px; }

/* side panes */
.plain { display: grid; place-items: center; }
.dbl { width: 14px; height: 12px; }
.filters { flex: none; width: 37px; background: #fff; border-left: 4px solid #eceaea; box-shadow: inset 1px 0 #9a9897; display: flex; flex-direction: column; align-items: center; padding-top: 13px; }
.filters .fic { width: 13px; height: 13px; margin: 17px 0 7px; transform: rotate(90deg); }
.filters h2 { writing-mode: vertical-rl; font-weight: 600; font-size: 14px; line-height: 18px; }
.pane { flex: none; width: 181px; background: #f3f2f1; border-left: 1px solid #dcdad8; position: relative; padding: 0 8px; }
.phead { display: flex; align-items: center; height: 38px; gap: 7px; }
.phead h2 { flex: 1; font-weight: 600; font-size: 15px; line-height: 20px; }
.sub { font-size: 11px; line-height: 16px; }
.visuals { border: 1px solid #797775; border-radius: 2px; background: #fff; margin-top: 4px; padding: 1px 3px 0; }
.vgrid { display: grid; grid-template-columns: repeat(6, 26px); }
.vis { height: 26px; }
.vgrid svg { width: 18px; height: 18px; }
.custom { border-top: 1px solid #797775; padding: 2px 0; margin-top: 2px; }
.data { margin-top: 9px; }
.well { border: 1px dashed #605e5c; margin-top: 3px; padding: 4px; height: 60px; }
.add { width: 100%; height: 34px; border: 1px solid #605e5c; background: #fff; font-weight: 600; font-size: 12px; }
.fields { padding: 0 5px 0 4px; }
.fields .phead { padding: 0 3px 0 5px; }
.search { display: flex; align-items: center; gap: 8px; height: 24px; margin-top: 7px; padding: 0 12px; background: #fff; border: 1px solid #d1d1d1; border-bottom-color: #616161; border-radius: 4px; }
.search input { flex: 1; min-width: 0; outline: 0; font-size: 12px; }
.search input::placeholder { color: #616161; opacity: 1; }
.tree { padding: 10px 0 0 10px; }
.tree li { display: flex; align-items: center; height: 24px; gap: 5px; }
.tw { width: 8px; height: 14px; margin-right: 1px; }
.mark { position: absolute; left: 7px; top: 99px; width: 136px; height: 87px; border: 2px solid #0b7a0b; }
.edge { flex: none; width: 4px; background: #fafafa; border-left: 1px solid #dcdad8; }
.edge div { height: 32px; border-bottom: 2px solid #555; background: #dcdad8; border-left: 1px solid #555; }
```

FILE: app.js
```js
const cell = ([id, label]) =>
  `<button class="vis" aria-label="${label}"><svg viewBox="0 0 18 18"><use href="#${id}"/></svg></button>`;

const fill = (target, items) => {
  document.getElementById(target).innerHTML = items.map(cell).join("");
};

const custom = [["cv1", "Visual 1"], ["cv2", "Visual 2"], ["cv3", "Visual 3"], ["cv4", "Visual 4"]];

fill("gallery", [
  ["sbar", "Barras empilhadas"], ["scol", "Colunas empilhadas"], ["cbar", "Barras"], ["ccol", "Colunas"],
  ["lcs", "Linhas e colunas empilhadas"], ["lcc", "Linhas e colunas"], ["line", "Linhas"], ["area", "Área"], ["slicer", "Segmentação"],
  ["pie", "Pizza"], ["donut", "Rosca"], ["tree", "Treemap"], ["globe", "Mapa"], ["gauge", "Medidor"], ...custom
]);

fill("visuals", [
  ["sbar", "Barras empilhadas"], ["scol", "Colunas empilhadas"], ["cbar2", "Barras"], ["ccol2", "Colunas"], ["hbar", "Barras 100%"], ["hcol", "Colunas 100%"],
  ["line", "Linhas"], ["area", "Área"], ["sarea", "Área empilhada"], ["harea", "Área 100%"], ["lcs", "Linhas e colunas empilhadas"], ["lcc", "Linhas e colunas"],
  ["ribbon", "Faixas"], ["waterfall", "Cascata"], ["funnel", "Funil"], ["scatter", "Dispersão"], ["pie", "Pizza"], ["donut2", "Rosca"],
  ["tree", "Treemap"], ["globe", "Mapa"], ["fmap", "Mapa preenchido"], ["smap", "Mapa de formas"], ["azure", "Azure Maps"], ["gauge", "Medidor"],
  ["card", "Cartão"], ["mcard", "Cartão de várias linhas"], ["kpi", "KPI"], ["slicer", "Segmentação"], ["table", "Tabela"], ["matrix", "Matriz"],
  ["rsc", "Script R"], ["py", "Python"], ["keyinf", "Influenciadores"], ["decomp", "Decomposição"], ["qna", "P e R"], ["narr", "Narrativa"],
  ["trophy", "Metas"], ["report", "Relatório paginado"], ["card-b", "Novo cartão"], ["slic-b", "Segmentação de botões"], ["text-b", "Segmentação de texto"], ["list-b", "Segmentação de lista"],
  ["arcgis", "ArcGIS"], ["papps", "Power Apps"], ["flow", "Power Automate"], ["more", "Mais visuais"]
]);

fill("custom", custom);
```
